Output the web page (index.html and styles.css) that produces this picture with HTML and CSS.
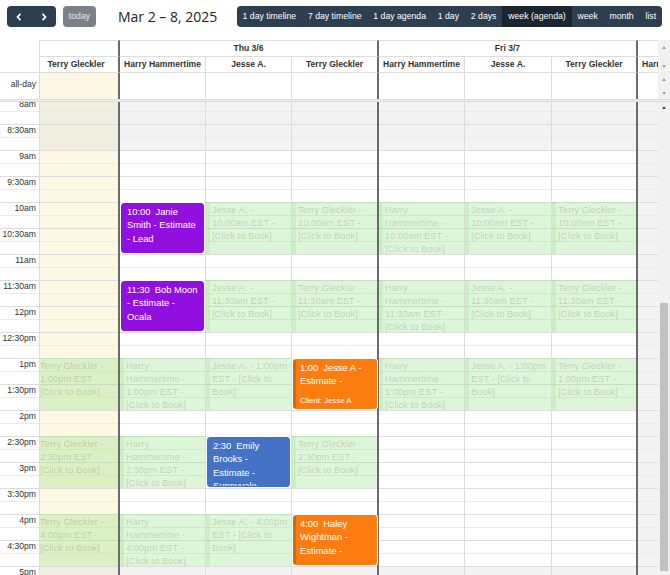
FILE: index.html
```html
<!DOCTYPE html>
<html>
<head>
<meta charset="utf-8">
<title>Calendar</title>
<link rel="stylesheet" href="styles.css">
</head>
<body>
<div class="toolbar">
  <div class="tb-left">
    <div class="btn-group">
      <button class="btn nav"><svg width="8" height="8" viewBox="0 0 8 8"><polyline points="5.5,0.8 2.5,4 5.5,7.2" fill="none" stroke="#fff" stroke-width="1.7"/></svg></button>
      <button class="btn nav"><svg width="8" height="8" viewBox="0 0 8 8"><polyline points="2.5,0.8 5.5,4 2.5,7.2" fill="none" stroke="#fff" stroke-width="1.7"/></svg></button>
    </div>
    <button class="btn today-btn">today</button>
    <h2 class="title">Mar 2 – 8, 2025</h2>
  </div>
  <div class="btn-group">
    <button class="btn">1 day timeline</button>
    <button class="btn">7 day timeline</button>
    <button class="btn">1 day agenda</button>
    <button class="btn">1 day</button>
    <button class="btn">2 days</button>
    <button class="btn active">week (agenda)</button>
    <button class="btn">week</button>
    <button class="btn">month</button>
    <button class="btn">list</button>
  </div>
</div>

<div class="cal">
  <div class="head cols">
    <div class="axis-h"></div>
    <div class="hc top dk"></div>
    <div class="hc top day dk">Thu 3/6</div>
    <div class="hc top day dk">Fri 3/7</div>
    <div class="hc top last"></div>
    <div class="gut g1"><span class="arr up"></span><span class="arr down"></span></div>

    <div class="hc dk shift">Terry Gleckler</div>
    <div class="hc">Harry Hammertime</div>
    <div class="hc">Jesse A.</div>
    <div class="hc dk">Terry Gleckler</div>
    <div class="hc">Harry Hammertime</div>
    <div class="hc">Jesse A.</div>
    <div class="hc dk">Terry Gleckler</div>
    <div class="hc last cut">Harry Hammertime</div>

    <div class="ad ad-axis">all-day</div>
    <div class="ad is-today dk"></div>
    <div class="ad"></div>
    <div class="ad"></div>
    <div class="ad dk"></div>
    <div class="ad"></div>
    <div class="ad"></div>
    <div class="ad dk"></div>
    <div class="ad last"></div>
    <div class="gut g2"><span class="arr up"></span><span class="arr down"></span></div>

    <div class="divider"></div>
  </div>

  <div class="body">
    <div class="main">
      <div class="grid">
        <div class="col axis">
          <div class="lbl">8am</div>
          <div class="lbl">8:30am</div>
          <div class="lbl">9am</div>
          <div class="lbl">9:30am</div>
          <div class="lbl">10am</div>
          <div class="lbl">10:30am</div>
          <div class="lbl">11am</div>
          <div class="lbl">11:30am</div>
          <div class="lbl">12pm</div>
          <div class="lbl">12:30pm</div>
          <div class="lbl">1pm</div>
          <div class="lbl">1:30pm</div>
          <div class="lbl">2pm</div>
          <div class="lbl">2:30pm</div>
          <div class="lbl">3pm</div>
          <div class="lbl">3:30pm</div>
          <div class="lbl">4pm</div>
          <div class="lbl">4:30pm</div>
          <div class="lbl">5pm</div>
          <div class="lbl">5:30pm</div>
        </div>

        <!-- Wed: Terry Gleckler (today, partly scrolled) -->
        <div class="col is-today dk clip">
          <div class="bg" style="top:260px;height:52px">Terry Gleckler - 1:00pm EST - [Click to Book]</div>
          <div class="bg" style="top:338px;height:52px">Terry Gleckler - 2:30pm EST - [Click to Book]</div>
          <div class="bg" style="top:416px;height:52px">Terry Gleckler - 4:00pm EST - [Click to Book]</div>
        </div>

        <!-- Thu: Harry Hammertime -->
        <div class="col">
          <div class="ev purple" style="top:105px;height:50px"><span class="t">10:00</span>Janie Smith - Estimate - Lead</div>
          <div class="ev purple" style="top:183px;height:50px"><span class="t">11:30</span>Bob Moon - Estimate - Ocala</div>
          <div class="bg" style="top:260px;height:52px">Harry Hammertime - 1:00pm EST - [Click to Book]</div>
          <div class="bg" style="top:338px;height:52px">Harry Hammertime - 2:30pm EST - [Click to Book]</div>
          <div class="bg" style="top:416px;height:52px">Harry Hammertime - 4:00pm EST - [Click to Book]</div>
        </div>

        <!-- Thu: Jesse A. -->
        <div class="col">
          <div class="bg" style="top:104px;height:52px">Jesse A. - 10:00am EST - [Click to Book]</div>
          <div class="bg" style="top:182px;height:52px">Jesse A. - 11:30am EST - [Click to Book]</div>
          <div class="bg" style="top:260px;height:52px">Jesse A. - 1:00pm EST - [Click to Book]</div>
          <div class="ev blue" style="top:339px;height:50px"><span class="t">2:30</span>Emily Brooks - Estimate - Sunnyvale</div>
          <div class="bg" style="top:416px;height:52px">Jesse A. - 4:00pm EST - [Click to Book]</div>
        </div>

        <!-- Thu: Terry Gleckler -->
        <div class="col dk">
          <div class="bg" style="top:104px;height:52px">Terry Gleckler - 10:00am EST - [Click to Book]</div>
          <div class="bg" style="top:182px;height:52px">Terry Gleckler - 11:30am EST - [Click to Book]</div>
          <div class="ev orange stack" style="top:261px;height:50px">
            <div><span class="t">1:00</span>Jesse A - Estimate -</div>
            <div class="client">Client: Jesse A</div>
          </div>
          <div class="bg" style="top:338px;height:52px">Terry Gleckler - 2:30pm EST - [Click to Book]</div>
          <div class="ev orange" style="top:417px;height:50px"><span class="t">4:00</span>Haley Wightman - Estimate -</div>
        </div>

        <!-- Fri: Harry Hammertime -->
        <div class="col">
          <div class="bg" style="top:104px;height:52px">Harry Hammertime - 10:00am EST - [Click to Book]</div>
          <div class="bg" style="top:182px;height:52px">Harry Hammertime - 11:30am EST - [Click to Book]</div>
          <div class="bg" style="top:260px;height:52px">Harry Hammertime - 1:00pm EST - [Click to Book]</div>
        </div>

        <!-- Fri: Jesse A. -->
        <div class="col">
          <div class="bg" style="top:104px;height:52px">Jesse A. - 10:00am EST - [Click to Book]</div>
          <div class="bg" style="top:182px;height:52px">Jesse A. - 11:30am EST - [Click to Book]</div>
          <div class="bg" style="top:260px;height:52px">Jesse A. - 1:00pm EST - [Click to Book]</div>
        </div>

        <!-- Fri: Terry Gleckler -->
        <div class="col dk">
          <div class="bg" style="top:104px;height:52px">Terry Gleckler - 10:00am EST - [Click to Book]</div>
          <div class="bg" style="top:182px;height:52px">Terry Gleckler - 11:30am EST - [Click to Book]</div>
          <div class="bg" style="top:260px;height:52px">Terry Gleckler - 1:00pm EST - [Click to Book]</div>
        </div>

        <!-- Sat: Harry Hammertime (partly visible) -->
        <div class="col off last"></div>
      </div>
    </div>
    <div class="vscroll">
      <span class="arr up dark"></span>
      <div class="thumb"></div>
    </div>
  </div>
</div>
</body>
</html>
```

FILE: styles.css
```css
* { box-sizing: border-box; }

:root {
  --slats: repeating-linear-gradient(to bottom,
    #dddddd 0, #dddddd 1px, transparent 1px, transparent 13px,
    #ebebeb 13px, #ebebeb 14px, transparent 14px, transparent 26px);
  --nb: linear-gradient(to bottom,
    rgba(215,215,215,.3) 0, rgba(215,215,215,.3) 52px,
    transparent 52px, transparent 468px,
    rgba(215,215,215,.3) 468px);
  --nb-all: linear-gradient(rgba(215,215,215,.3), rgba(215,215,215,.3));
}

html, body { margin: 0; padding: 0; }

body {
  width: 670px;
  height: 575px;
  overflow: hidden;
  background: #fff;
  color: #333;
  font-family: "Liberation Sans", Arial, sans-serif;
}

/* ---------- toolbar ---------- */
.toolbar {
  display: flex;
  justify-content: space-between;
  align-items: center;
  height: 21px;
  margin: 6px 8px 13px 7px;
}
.tb-left { display: flex; align-items: center; }

.btn-group {
  display: flex;
  border-radius: 4px;
  overflow: hidden;
}
.btn {
  border: 0;
  margin: 0;
  height: 21px;
  padding: 0 5.9px;
  background: #2c3e50;
  color: #fff;
  font: 8.7px/21px "Liberation Sans", Arial, sans-serif;
  white-space: nowrap;
  display: flex;
  align-items: center;
  justify-content: center;
}
.btn.active { background: #1a252f; }
.nav { width: 24.5px; padding: 0; }
.today-btn {
  margin-left: 7px;
  width: 33px;
  padding: 0;
  border-radius: 4px;
  background: #7b8189;
  color: #e6e6e6;
}
.title {
  margin: 0 0 0 22px;
  font: 400 14px/21px "Open Sans", "Liberation Sans", sans-serif;
  color: #222;
  white-space: nowrap;
}

/* ---------- shared column template ---------- */
.cols {
  display: grid;
  grid-template-columns: 40px 80px 86px 86px 87px 86px 87px 86px 20px 12px;
}

/* ---------- header ---------- */
.head { grid-template-rows: 17px 16px 26px 3px; }

.axis-h {
  grid-row: span 2;
  border-right: 1px solid #ddd;
  border-bottom: 1px solid #ddd;
}
.hc {
  border-right: 1px solid #ddd;
  border-bottom: 1px solid #ddd;
  font-weight: bold;
  font-size: 8.6px;
  line-height: 15px;
  text-align: center;
  white-space: nowrap;
  overflow: hidden;
  color: #333;
}
.hc.top { border-top: 1px solid #ddd; }
.day { grid-column: span 3; }
.dk { border-right: 2px solid #6b6b6b !important; }
.last { border-right: 0 !important; }
.shift { padding-right: 6px; }
.cut { text-align: left; padding-left: 4px; }

.ad {
  border-right: 1px solid #ddd;
  background: #fff;
}
.ad.is-today { background: #fcf8e3; }
.ad-axis {
  font-size: 8.6px;
  line-height: 13px;
  padding: 5px 3px 0 0;
  text-align: right;
  color: #333;
}

.divider {
  grid-column: 1 / -1;
  border-top: 1px solid #ddd;
  border-bottom: 1px solid #ddd;
  background: #eee;
}

.gut {
  background: #f1f1f1;
  display: flex;
  flex-direction: column;
  align-items: center;
  justify-content: space-between;
}
.g1 { grid-row: span 2; padding: 6px 0 5px; }
.g2 { padding: 5px 0 4px; }

.arr {
  display: block;
  width: 0;
  height: 0;
  border-left: 2.5px solid transparent;
  border-right: 2.5px solid transparent;
}
.arr.up { border-bottom: 3px solid #a3a3a3; }
.arr.down { border-top: 3px solid #a3a3a3; }
.arr.up.dark { border-bottom-color: #505050; }

/* ---------- time grid body ---------- */
.body {
  display: grid;
  grid-template-columns: 658px 12px;
  height: 473px;
}
.main { overflow: hidden; height: 473px; }
.grid {
  display: grid;
  grid-template-columns: 40px 80px 86px 86px 87px 86px 87px 86px 20px;
  height: 520px;
  margin-top: -4px;
}

.col {
  position: relative;
  border-right: 1px solid #ddd;
  background-color: #fff;
  background-image: var(--slats), var(--nb);
}
.col.is-today { background-color: #fcf8e3; }
.col.clip { overflow: hidden; }
.col.off { background-image: var(--slats), var(--nb-all); }
.col.axis { background-image: var(--slats); }

.lbl {
  height: 26px;
  font-size: 8.6px;
  line-height: 13px;
  text-align: right;
  padding-right: 3px;
  color: #333;
  white-space: nowrap;
}

/* background (availability) events */
.bg {
  position: absolute;
  left: 0;
  right: 0;
  z-index: 1;
  background: rgba(143,223,130,.3);
  padding: 1px 1.5px 0 6px;
  font-size: 9.4px;
  line-height: 13px;
  color: rgba(0,0,0,.17);
  overflow: hidden;
}
.bg::before {
  content: "";
  position: absolute;
  left: 0;
  top: 0;
  bottom: 0;
  width: 4px;
  background: rgba(143,223,130,.22);
}
.col.clip .bg { left: -6px; }

/* foreground events */
.ev {
  position: absolute;
  left: 1px;
  right: 1px;
  z-index: 2;
  color: #fff;
  border: 1px solid transparent;
  border-radius: 3px;
  padding: 1px 3px 0 5px;
  font-size: 9.4px;
  line-height: 13.3px;
  overflow: hidden;
  box-shadow: 0 0 0 1px #fff;
}
.ev .t { margin-right: 5px; }
.ev.purple { background: #9110df; border-color: #9110df; }
.ev.blue { background: #4472c4; border-color: #4472c4; }
.ev.orange {
  background: #fd7c10;
  border-color: #fd7c10;
  border-left: 3px solid #d8690b;
  padding-left: 4px;
  right: 0;
}
.ev.stack { display: flex; flex-direction: column; }
.client {
  margin-top: auto;
  font-size: 7.8px;
  line-height: 10px;
  padding-bottom: 2px;
}

/* fake vertical scrollbar */
.vscroll {
  background: #f1f1f1;
  display: flex;
  flex-direction: column;
  align-items: center;
}
.vscroll .arr { margin-top: 4px; }
.thumb {
  width: 8px;
  height: 268px;
  margin-top: 194px;
  background: #c1c1c1;
}
```
